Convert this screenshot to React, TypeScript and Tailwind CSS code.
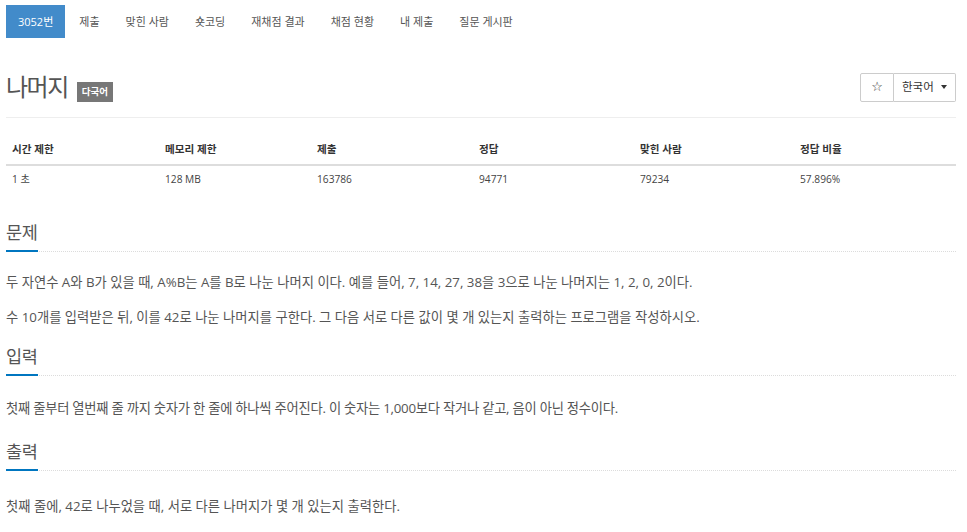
import type { ReactNode } from 'react';

const TABS = ['제출', '맞힌 사람', '숏코딩', '재채점 결과', '채점 현황', '내 제출', '질문 게시판'];

const STATS = [
    { label: '시간 제한', value: '1 초' },
    { label: '메모리 제한', value: '128 MB' },
    { label: '제출', value: '163786' },
    { label: '정답', value: '94771' },
    { label: '맞힌 사람', value: '79234' },
    { label: '정답 비율', value: '57.896%' },
];

function Section({ title, children, className, bodyClass = 'mt-[18px]' }: { title: string; children: ReactNode; className?: string; bodyClass?: string }) {
    return (
        <section className={className}>
            <div className="flex border-b border-dotted border-[#dcdcdc]">
                <h2 className="-mb-px border-b-2 border-[#0076c0] pb-[4px] text-[17.5px] leading-[28px] tracking-[-0.3px] text-[#555]">
                    {title}
                </h2>
            </div>
            <div className={bodyClass + ' text-[13.3px] leading-[25px] text-[#555]'}>{children}</div>
        </section>
    );
}

export default function App() {
    return (
        <div className="min-h-screen bg-white pl-[6px] pr-[11px] pt-[5px] font-['Open_Sans','Noto_Sans_CJK_KR',sans-serif] text-[#333]">
            {/* Problem menu */}
            <ul className="flex gap-[2px]">
                <li>
                    <a className="block bg-[#428bca] px-[12px] py-[10px] text-[11px] leading-[13px] text-white">3052번</a>
                </li>
                {TABS.map((t) => (
                    <li key={t}>
                        <a className="block px-[12px] py-[10px] text-[11px] leading-[13px] text-[#555]">{t}</a>
                    </li>
                ))}
            </ul>

            {/* Page header */}
            <div className="mt-[24px] flex h-[56px] items-center justify-between border-b border-[#eee] pb-[5px]">
                <div className="flex items-center">
                    <h1 className="text-[24px] leading-none tracking-[-1.5px] text-[#555]">나머지</h1>
                    <span className="ml-[9px] mt-[10px] h-[20px] bg-[#777] px-[5px] text-[9.5px] font-bold leading-[20px] text-white">
                        다국어
                    </span>
                </div>
                <div className="flex">
                    <button className="flex h-[29px] w-[34px] items-center justify-center rounded-l-[2px] border border-[#ccc] font-['DejaVu_Sans',sans-serif] text-[13px] text-[#333]">
                        ☆
                    </button>
                    <button className="flex h-[29px] w-[62px] items-center justify-between rounded-r-[2px] border border-l-0 border-[#ccc] pl-[8px] pr-[8px] text-[11.5px] text-[#333]">
                        <span>한국어</span>
                        <span className="inline-block h-0 w-0 border-x-[3px] border-t-[4px] border-x-transparent border-t-[#333]" />
                    </button>
                </div>
            </div>

            {/* Stats table */}
            <div className="mt-[18px] grid grid-cols-[153px_152px_162px_161px_160px_1fr]">
                {STATS.map((s) => (
                    <div key={s.label} className="flex h-[30px] items-center border-b-2 border-[#ddd] pl-[6px] text-[10.6px] font-bold text-[#333]">
                        {s.label}
                    </div>
                ))}
                {STATS.map((s) => (
                    <div key={s.label + '-v'} className="flex h-[28px] items-center pl-[6px] text-[10.2px] text-[#444]">
                        {s.value}
                    </div>
                ))}
            </div>

            <Section title="문제" className="mt-[24px]">
                <p className="mb-[10px]">
                    두 자연수 A와 B가 있을 때, A%B는 A를 B로 나눈 나머지 이다. 예를 들어, 7, 14, 27, 38을 3으로 나눈 나머지는 1, 2, 0, 2이다.
                </p>
                <p className="mb-[10px]">
                    수 10개를 입력받은 뒤, 이를 42로 나눈 나머지를 구한다. 그 다음 서로 다른 값이 몇 개 있는지 출력하는 프로그램을 작성하시오.
                </p>
            </Section>

            <Section title="입력" className="mt-[12px]" bodyClass="mt-[20px]">
                <p className="mb-[10px] tracking-[-0.25px]">
                    첫째 줄부터 열번째 줄 까지 숫자가 한 줄에 하나씩 주어진다. 이 숫자는 1,000보다 작거나 같고, 음이 아닌 정수이다.
                </p>
            </Section>

            <Section title="출력" className="mt-[16px]" bodyClass="mt-[23px]">
                <p className="mb-[10px]">첫째 줄에, 42로 나누었을 때, 서로 다른 나머지가 몇 개 있는지 출력한다.</p>
            </Section>
        </div>
    );
}
